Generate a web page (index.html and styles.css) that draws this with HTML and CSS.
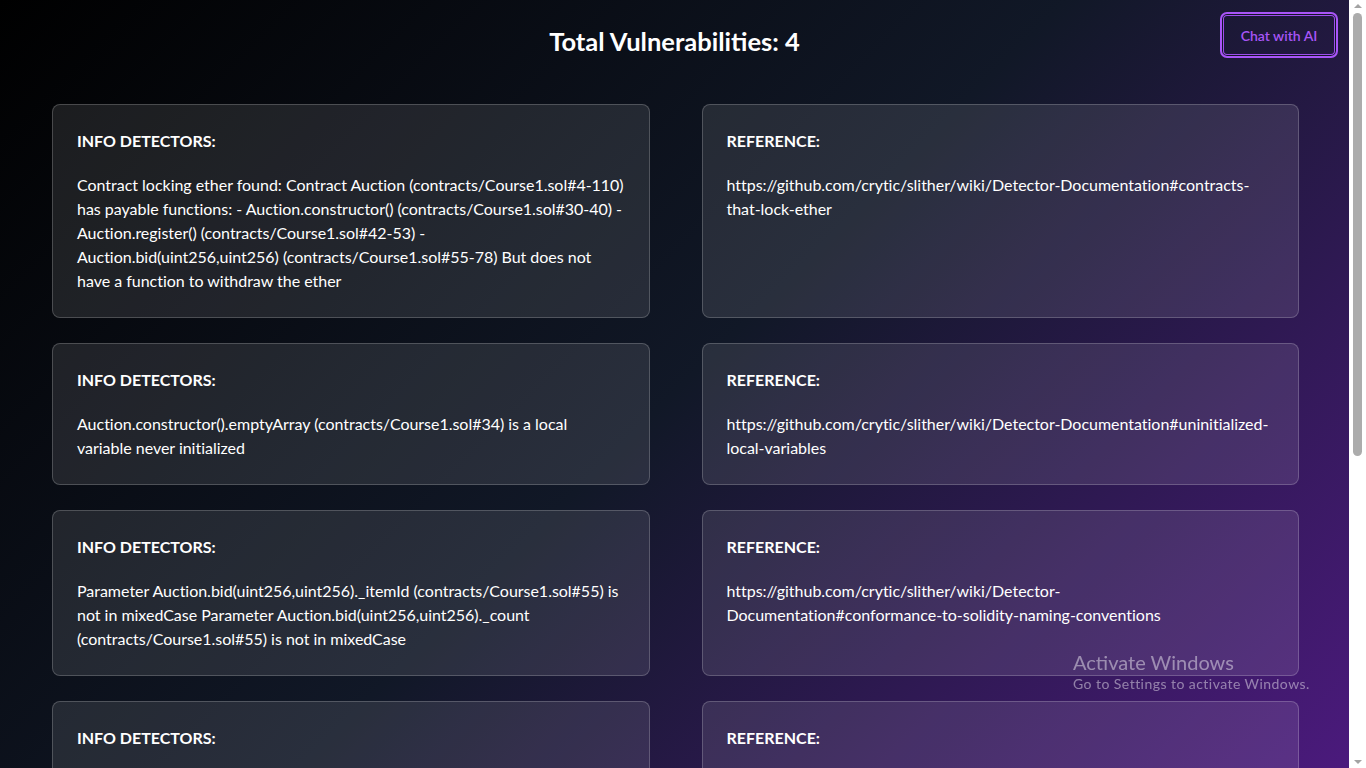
FILE: index.html
```html
<!DOCTYPE html>
<html lang="en">
<head>
  <meta charset="UTF-8">
  <meta name="viewport" content="width=device-width, initial-scale=1.0">
  <title>Vulnerability Report</title>
  <link rel="stylesheet" href="styles.css">
</head>
<body>
  <div class="header">
    <div></div>
    <h1 class="title">Total Vulnerabilities: 4</h1>
    <button class="chat-btn">Chat with AI</button>
  </div>

  <div class="report">
    <div class="card">
      <h2 class="card-title">INFO DETECTORS:</h2>
      <p class="card-text">Contract locking ether found: Contract Auction (contracts/Course1.sol#4-110) has payable functions: - Auction.constructor() (contracts/Course1.sol#30-40) - Auction.register() (contracts/Course1.sol#42-53) - Auction.bid(uint256,uint256) (contracts/Course1.sol#55-78) But does not have a function to withdraw the ether</p>
    </div>
    <div class="card">
      <h2 class="card-title">REFERENCE:</h2>
      <p class="card-text">https://github.com/crytic/slither/wiki/Detector-Documentation#contracts-that-lock-ether</p>
    </div>

    <div class="card">
      <h2 class="card-title">INFO DETECTORS:</h2>
      <p class="card-text">Auction.constructor().emptyArray (contracts/Course1.sol#34) is a local variable never initialized</p>
    </div>
    <div class="card">
      <h2 class="card-title">REFERENCE:</h2>
      <p class="card-text">https://github.com/crytic/slither/wiki/Detector-Documentation#uninitialized-local-variables</p>
    </div>

    <div class="card">
      <h2 class="card-title">INFO DETECTORS:</h2>
      <p class="card-text">Parameter Auction.bid(uint256,uint256)._itemId (contracts/Course1.sol#55) is not in mixedCase Parameter Auction.bid(uint256,uint256)._count (contracts/Course1.sol#55) is not in mixedCase</p>
    </div>
    <div class="card">
      <h2 class="card-title">REFERENCE:</h2>
      <p class="card-text">https://github.com/crytic/slither/wiki/Detector-Documentation#conformance-to-solidity-naming-conventions</p>
    </div>

    <div class="card">
      <h2 class="card-title">INFO DETECTORS:</h2>
      <p class="card-text">Pragma version^0.8.0 (contracts/Course1.sol#2) allows old versions solc-0.8.0 is not recommended for deployment</p>
    </div>
    <div class="card">
      <h2 class="card-title">REFERENCE:</h2>
      <p class="card-text">https://github.com/crytic/slither/wiki/Detector-Documentation#incorrect-versions-of-solidity</p>
    </div>
  </div>

  <!-- windows watermark -->
  <div class="watermark">
    <div class="watermark-big">Activate Windows</div>
    <div class="watermark-small">Go to Settings to activate Windows.</div>
  </div>

  <!-- classic scrollbar -->
  <div class="scrollbar">
    <div class="arrow-up"></div>
    <div class="thumb"></div>
    <div class="arrow-down"></div>
  </div>
</body>
</html>
```

FILE: styles.css
```css
body {
  margin: 0;
  padding-right: 17px;
  min-height: 100vh;
  font-family: "Segoe UI", Lato, "Noto Sans", sans-serif;
  color: #ffffff;
  background: linear-gradient(135deg, #000000 0%, #111827 50%, #4c1a7e 100%);
  background-attachment: fixed;
}
.header {
  display: grid;
  grid-template-columns: 1fr auto 1fr;
  align-items: start;
  padding-top: 12px;
}
.title {
  margin: 13px 0 0;
  font-size: 25.5px;
  line-height: 32px;
  font-weight: 700;
}
.chat-btn {
  justify-self: end;
  margin-right: 11px;
  width: 118px;
  height: 46px;
  background: transparent;
  border: 2px solid #a855f7;
  border-radius: 7px;
  box-shadow: inset 0 0 0 1px #121526, inset 0 0 0 2px #9d4ded;
  color: #a855f7;
  font-family: inherit;
  font-size: 14px;
  font-weight: 600;
  cursor: pointer;
}
.report {
  display: grid;
  grid-template-columns: 1fr 1fr;
  column-gap: 52px;
  row-gap: 25px;
  padding: 46px 50px 40px 52px;
}
.card {
  padding: 24px;
  border: 1px solid rgba(255, 255, 255, 0.2);
  border-radius: 8px;
  background-color: rgba(255, 255, 255, 0.1);
}
.card-title {
  margin: 0 0 20px;
  font-size: 16px;
  line-height: 24px;
  font-weight: 700;
}
.card-text {
  margin: 0;
  font-size: 16px;
  line-height: 24px;
  letter-spacing: -0.02px;
  overflow-wrap: break-word;
}
.watermark {
  position: fixed;
  left: 1073px;
  top: 650px;
  color: rgba(255, 255, 255, 0.45);
  pointer-events: none;
}
.watermark-big {
  font-size: 20px;
  line-height: 24px;
}
.watermark-small {
  font-size: 14px;
  line-height: 20px;
  letter-spacing: 0.45px;
}
.scrollbar {
  position: fixed;
  top: 0;
  right: 0;
  width: 17px;
  height: 100vh;
  background-color: #ffffff;
}
.thumb {
  position: absolute;
  top: 13px;
  left: 4px;
  width: 9px;
  height: 443px;
  border-radius: 5px;
  background-color: #acacac;
}
.arrow-up,
.arrow-down {
  position: absolute;
  left: 5px;
  width: 0;
  height: 0;
  border-left: 4px solid transparent;
  border-right: 4px solid transparent;
}
.arrow-up {
  top: 4px;
  border-bottom: 4px solid #a3a3a3;
}
.arrow-down {
  bottom: 4px;
  border-top: 4px solid #a3a3a3;
}
```
